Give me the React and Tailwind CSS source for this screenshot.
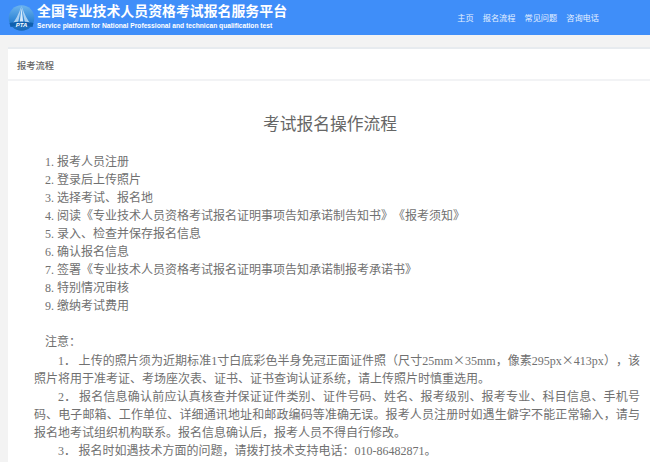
import React from 'react'

const nav = ['主页', '报名流程', '常见问题', '咨询电话']

const steps = [
  '1. 报考人员注册',
  '2. 登录后上传照片',
  '3. 选择考试、报名地',
  '4. 阅读《专业技术人员资格考试报名证明事项告知承诺制告知书》《报考须知》',
  '5. 录入、检查并保存报名信息',
  '6. 确认报名信息',
  '7. 签署《专业技术人员资格考试报名证明事项告知承诺制报考承诺书》',
  '8. 特别情况审核',
  '9. 缴纳考试费用',
]

const times = <span className="font-['Noto_Sans_CJK_SC',sans-serif]">×</span>

// \u2009 keeps the small gap after the full-width dot
const notes = [
  <>1．{'\u2009'}上传的照片须为近期标准1寸白底彩色半身免冠正面证件照（尺寸25mm{times}35mm，像素295px{times}413px），该照片将用于准考证、考场座次表、证书、证书查询认证系统，请上传照片时慎重选用。</>,
  '2．\u2009报名信息确认前应认真核查并保证证件类别、证件号码、姓名、报考级别、报考专业、科目信息、手机号码、电子邮箱、工作单位、详细通讯地址和邮政编码等准确无误。报考人员注册时如遇生僻字不能正常输入，请与报名地考试组织机构联系。报名信息确认后，报考人员不得自行修改。',
  '3．\u2009报名时如遇技术方面的问题，请拨打技术支持电话：010-86482871。',
]

function Logo() {
  return (
    <svg width="27" height="30" viewBox="0 0 27 30" className="shrink-0">
      <defs>
        <linearGradient id="globe" x1="0" y1="0" x2="0" y2="1">
          <stop offset="0" stopColor="#6db4ee" />
          <stop offset="0.6" stopColor="#2f86d6" />
          <stop offset="1" stopColor="#1766b4" />
        </linearGradient>
      </defs>
      <circle cx="13.5" cy="15" r="12.8" fill="url(#globe)" />
      <path d="M13.5 3 L10 20 L4 21 Q9 16 13.5 3 Z" fill="#cfe6fa" opacity="0.75" />
      <path d="M13.5 3 L17 20 L23 21 Q18 16 13.5 3 Z" fill="#cfe6fa" opacity="0.75" />
      <path d="M13.5 5 L11.6 20 L15.4 20 Z" fill="#e8f4fe" opacity="0.9" />
      <path d="M1.5 20 Q13.5 17 25.5 20 L24.5 24 Q13.5 21 2.5 24 Z" fill="#0f5fae" />
      <text x="13.5" y="23.5" textAnchor="middle" fontSize="6" fontWeight="700" fontStyle="italic" fill="#fff" fontFamily="Liberation Sans, sans-serif">PTA</text>
    </svg>
  )
}

export default function App() {
  return (
    <div className="h-[462px] w-[650px] overflow-hidden bg-[#f3f3f3] font-['Liberation_Serif','Noto_Sans_CJK_SC',serif] text-[#707070] [text-spacing-trim:space-all]">
      <header className="flex h-[35px] items-center bg-[#3f8ef9] pl-2 text-white">
        <Logo />
        <div className="ml-[2px] -mt-[3px] font-['Liberation_Sans','Noto_Sans_CJK_SC',sans-serif] font-bold">
          <div className="text-[13.9px] leading-[18px]">全国专业技术人员资格考试报名服务平台</div>
          <div className="mt-[1px] text-[6.7px] leading-[9px]">Service platform for National Professional and technican qualification test</div>
        </div>
        <nav className="ml-auto mr-[51px] flex gap-[9px] font-['Noto_Sans_CJK_SC',sans-serif] text-[8.2px] text-[#e6f0ff]">
          {nav.map(n => <a key={n}>{n}</a>)}
        </nav>
      </header>

      <main className="ml-2 mt-3 h-full border-t-2 border-[#e7ebef] bg-white">
        <div className="flex h-[32px] items-center border-b-2 border-[#f2f3f5] pl-[9px] pt-[3px] font-['Noto_Sans_CJK_SC',sans-serif] text-[9.25px] font-medium text-[#666]">
          报考流程
        </div>

        <h1 className="mt-[31px] pl-[2px] text-center font-['Noto_Sans_CJK_SC',sans-serif] text-[16.75px] leading-[22px] text-[#666]">
          考试报名操作流程
        </h1>

        <div className="mt-[19px] pl-[26px] pr-[10px] text-[12px] leading-[18px]">
          <ol className="pl-[11px]">
            {steps.map(s => <li key={s}>{s}</li>)}
          </ol>
          <p className="mt-[18px] pl-[11px]">注意：</p>
          {notes.map((n, i) => (
            <p key={i} className="indent-[24px] text-justify">{n}</p>
          ))}
        </div>
      </main>
    </div>
  )
}
